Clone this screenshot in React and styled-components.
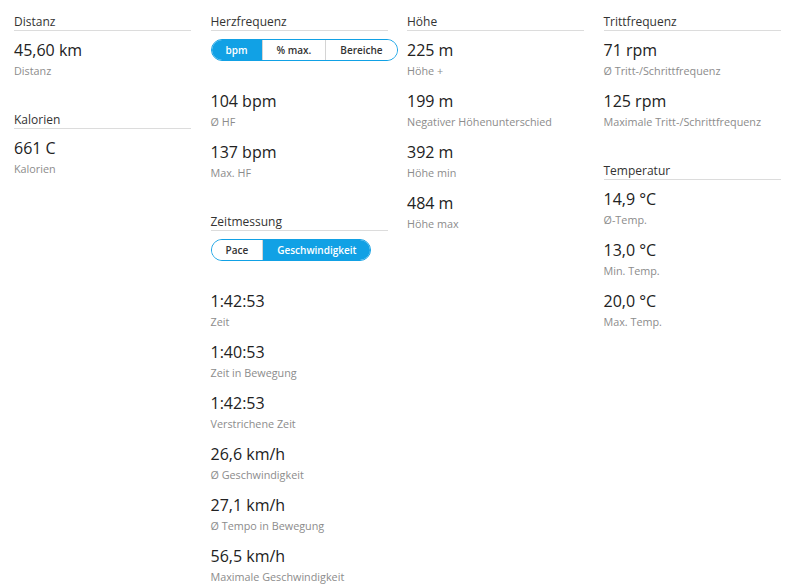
import React from 'react';
import styled, { createGlobalStyle } from 'styled-components';

const GlobalStyle = createGlobalStyle`
  html, body {
    margin: 0;
    padding: 0;
    background: #fff;
    overflow: hidden;
  }
  body {
    font-family: 'Open Sans', 'Liberation Sans', sans-serif;
    color: #333;
  }
`;

const Page = styled.div`
  display: grid;
  grid-template-columns: repeat(4, 177px);
  column-gap: 19.5px;
  align-items: start;
  padding: 14px 0 0 14px;
`;

const Column = styled.div`
  display: flex;
  flex-direction: column;
  gap: 23px;
`;

const Section = styled.section`
  display: flex;
  flex-direction: column;
`;

const Header = styled.h3`
  margin: 0 0 7px;
  font-size: 12px;
  font-weight: 400;
  line-height: 16px;
  color: #333;
  border-bottom: 1px solid #dcdcdc;
`;

const Stat = styled.div`
  margin-bottom: 9px;
`;

const Value = styled.div`
  font-size: 16px;
  line-height: 24px;
  color: #222;
`;

const Label = styled.div`
  font-size: 10.8px;
  line-height: 18px;
  color: #8c8c8c;
  white-space: nowrap;
`;

const Toggle = styled.div`
  display: inline-flex;
  align-self: flex-start;
  height: 22px;
  margin: 1px 0 28px;
  border: 1px solid #11a1e5;
  border-radius: 12px;
  overflow: hidden;
  box-sizing: border-box;
`;

const Segment = styled.button`
  font-family: inherit;
  font-size: 10px;
  font-weight: 600;
  white-space: nowrap;
  padding: 0 14px;
  margin: 0;
  border: none;
  border-left: 1px solid #d4d4d4;
  background: ${(p) => (p.$active ? '#11a1e5' : '#fff')};
  color: ${(p) => (p.$active ? '#fff' : '#333')};
  line-height: 20px;
  cursor: pointer;
  &:first-child {
    border-left: none;
  }
`;

function Group({ title, options, active, stats }) {
  return (
    <Section>
      <Header>{title}</Header>
      {options && (
        <Toggle>
          {options.map((o) => (
            <Segment key={o} $active={o === active}>
              {o}
            </Segment>
          ))}
        </Toggle>
      )}
      {stats.map(([value, label]) => (
        <Stat key={label}>
          <Value>{value}</Value>
          <Label>{label}</Label>
        </Stat>
      ))}
    </Section>
  );
}

export default function App() {
  return (
    <>
      <GlobalStyle />
      <Page>
        <Column>
          <Group title="Distanz" stats={[['45,60 km', 'Distanz']]} />
          <Group title="Kalorien" stats={[['661 C', 'Kalorien']]} />
        </Column>
        <Column>
          <Group
            title="Herzfrequenz"
            options={['bpm', '% max.', 'Bereiche']}
            active="bpm"
            stats={[
              ['104 bpm', 'Ø HF'],
              ['137 bpm', 'Max. HF'],
            ]}
          />
          <Group
            title="Zeitmessung"
            options={['Pace', 'Geschwindigkeit']}
            active="Geschwindigkeit"
            stats={[
              ['1:42:53', 'Zeit'],
              ['1:40:53', 'Zeit in Bewegung'],
              ['1:42:53', 'Verstrichene Zeit'],
              ['26,6 km/h', 'Ø Geschwindigkeit'],
              ['27,1 km/h', 'Ø Tempo in Bewegung'],
              ['56,5 km/h', 'Maximale Geschwindigkeit'],
            ]}
          />
        </Column>
        <Column>
          <Group
            title="Höhe"
            stats={[
              ['225 m', 'Höhe +'],
              ['199 m', 'Negativer Höhenunterschied'],
              ['392 m', 'Höhe min'],
              ['484 m', 'Höhe max'],
            ]}
          />
        </Column>
        <Column>
          <Group
            title="Trittfrequenz"
            stats={[
              ['71 rpm', 'Ø Tritt-/Schrittfrequenz'],
              ['125 rpm', 'Maximale Tritt-/Schrittfrequenz'],
            ]}
          />
          <Group
            title="Temperatur"
            stats={[
              ['14,9 °C', 'Ø-Temp.'],
              ['13,0 °C', 'Min. Temp.'],
              ['20,0 °C', 'Max. Temp.'],
            ]}
          />
        </Column>
      </Page>
    </>
  );
}
